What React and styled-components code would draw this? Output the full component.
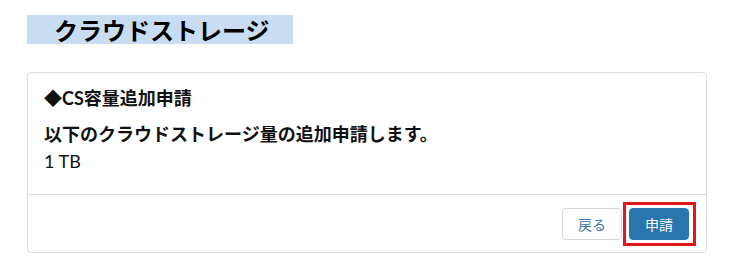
import React from "react";
import styled, { createGlobalStyle } from "styled-components";

const Global = createGlobalStyle`
  html, body { margin: 0; padding: 0; background: #fff; }
  body { font-family: Lato, "Noto Sans CJK JP", sans-serif; color: #111; }
`;

const Page = styled.div`
  padding: 15px 30px 0 27px;
`;

const Banner = styled.h1`
  margin: 0;
  width: 266px;
  height: 29px;
  box-sizing: border-box;
  padding-left: 27px;
  background: #c9ddf2;
  font-family: "Noto Sans CJK JP", sans-serif;
  font-weight: 700;
  font-size: 24px;
  line-height: 29px;
  color: #000;
`;

const Card = styled.section`
  margin-top: 28px;
  width: 680px;
  box-sizing: border-box;
  border: 1px solid #dcdcdc;
  border-radius: 4px;
  box-shadow: 0 1px 1px rgba(0, 0, 0, 0.04);
`;

const Body = styled.div`
  padding: 12px 16px 19px;
  display: flex;
  flex-direction: column;
`;

const Title = styled.h4`
  margin: 0 0 9px;
  font-size: 18px;
  line-height: 27px;
  font-weight: 700;
`;

const Line = styled.p`
  margin: 0;
  font-size: 18px;
  line-height: 27px;
  font-weight: ${(p) => (p.$bold ? 700 : 400)};
`;

const Footer = styled.div`
  border-top: 1px solid #dcdcdc;
  padding: 7px 10px 6px;
  display: flex;
  justify-content: flex-end;
  align-items: center;
  gap: 1px;
`;

const Button = styled.button`
  height: 32px;
  padding: 0 15px;
  border-radius: 4px;
  font-family: "Noto Sans CJK JP", sans-serif;
  font-size: 14px;
  font-weight: 400;
  line-height: 30px;
  cursor: pointer;
  border: 1px solid ${(p) => (p.$primary ? "#2876ad" : "#d4d4d4")};
  background: ${(p) => (p.$primary ? "#2876ad" : "#fff")};
  color: ${(p) => (p.$primary ? "#fff" : "#3f75a8")};
`;

const Highlight = styled.div`
  border: 3px solid #e8141c;
  padding: 3px 4px 3px 3px;
  display: flex;
`;

export default function App() {
  return (
    <>
      <Global />
      <Page>
        <Banner>クラウドストレージ</Banner>
        <Card>
          <Body>
            <Title>◆CS容量追加申請</Title>
            <Line $bold>以下のクラウドストレージ量の追加申請します。</Line>
            <Line>1 TB</Line>
          </Body>
          <Footer>
            <Button>戻る</Button>
            <Highlight>
              <Button $primary>申請</Button>
            </Highlight>
          </Footer>
        </Card>
      </Page>
    </>
  );
}
